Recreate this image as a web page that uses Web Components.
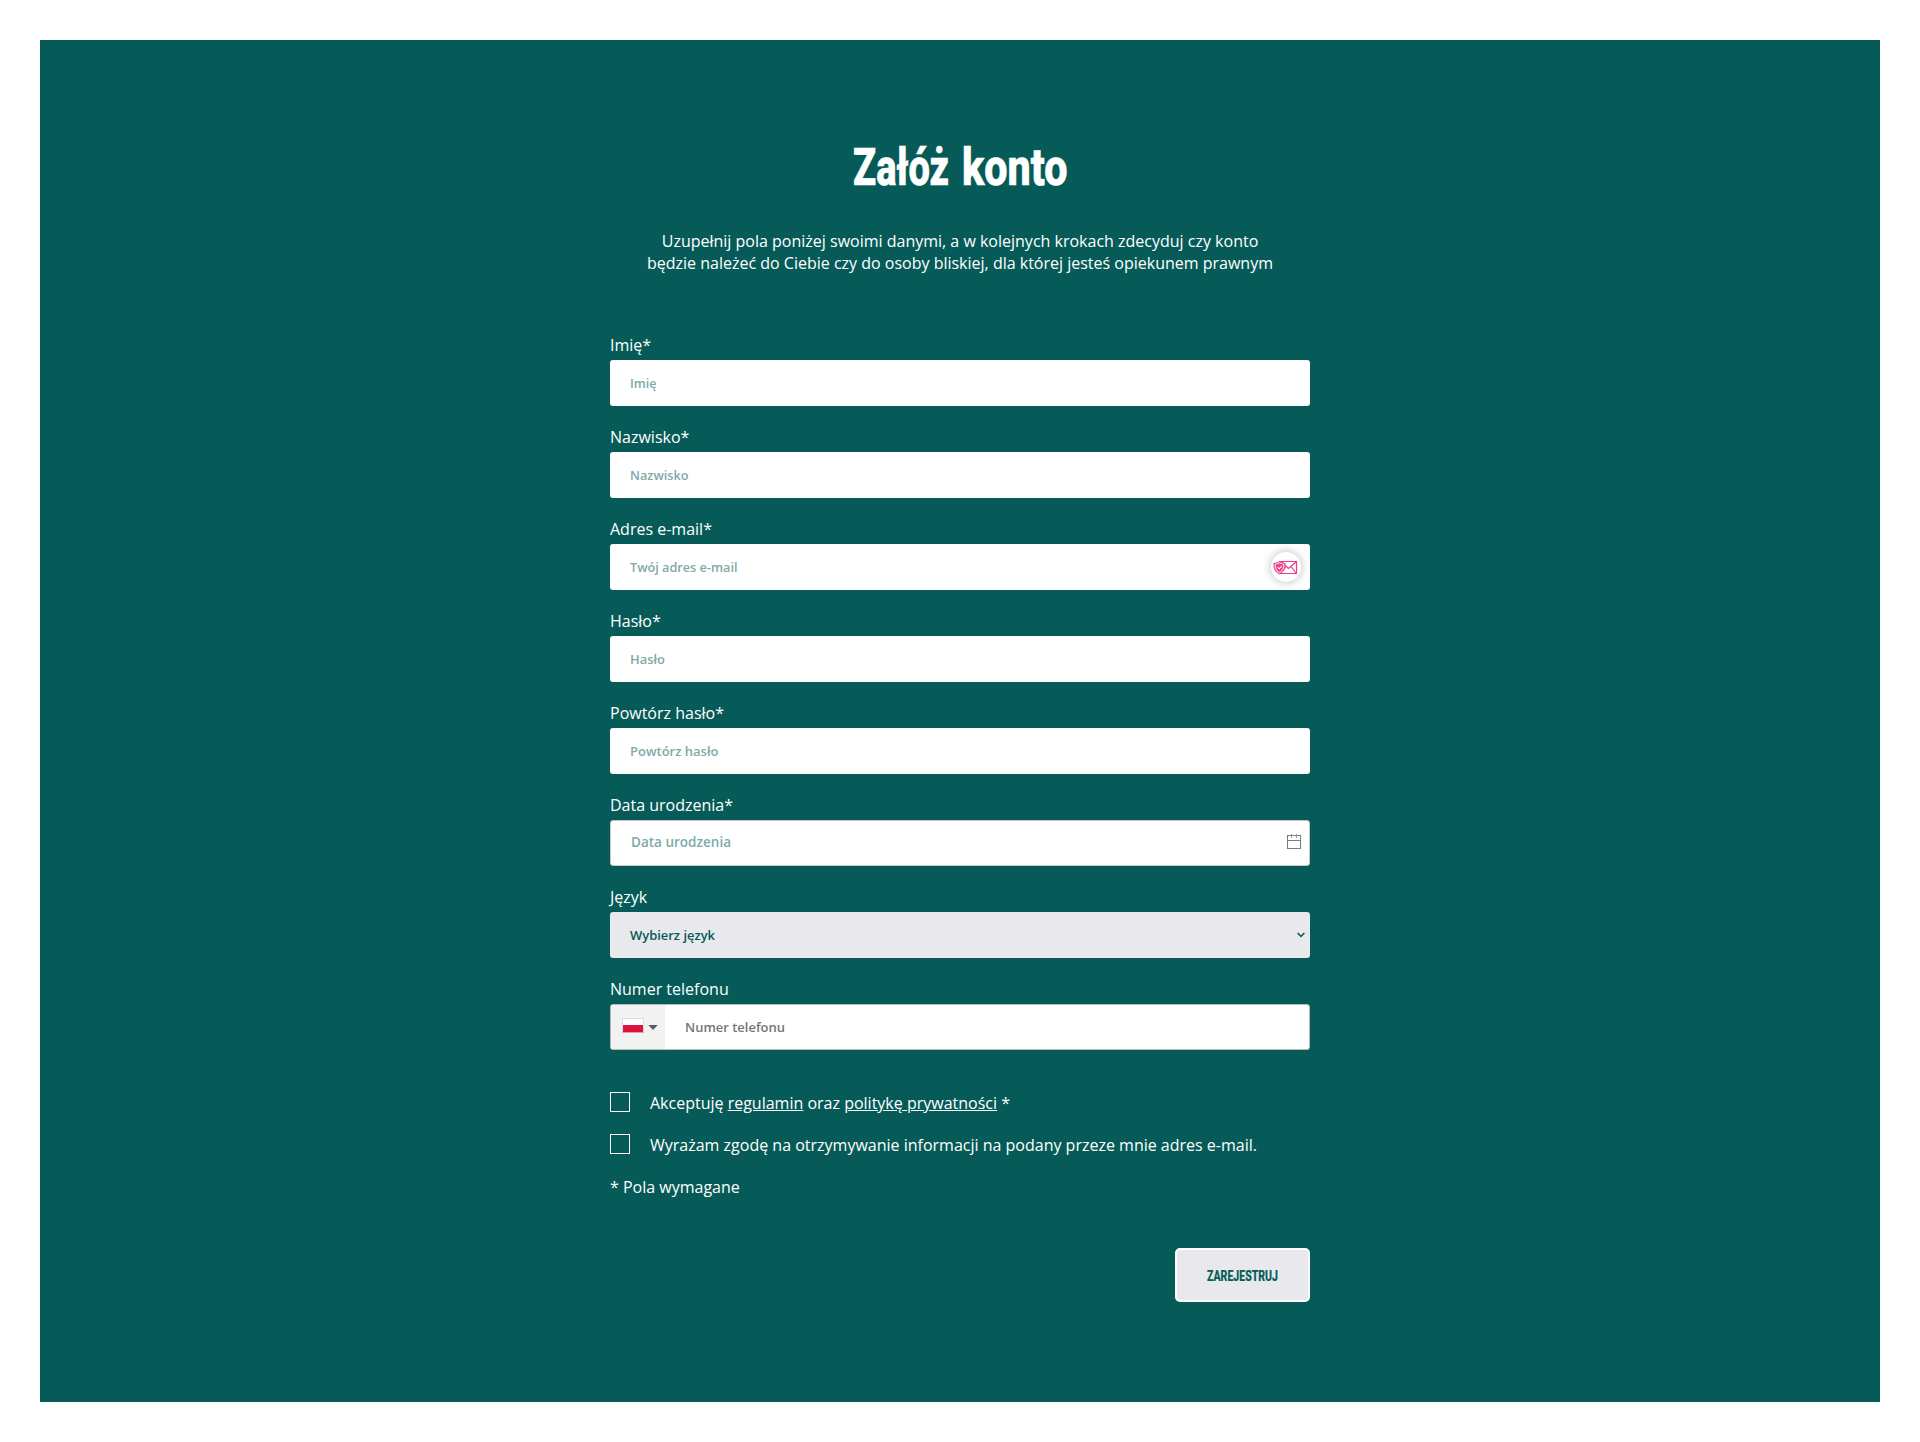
<!DOCTYPE html>
<html lang="pl">
<head>
<meta charset="utf-8">
<title>Załóż konto</title>
<style>
html,body{margin:0;background:#fff}
body{font:16px/22px "Open Sans",sans-serif;color:#fff}
</style>
</head>
<body>
<sign-up-page></sign-up-page>
<script>
const define=(name,html,setup)=>customElements.define(name,class extends HTMLElement{
  constructor(){super();this.attachShadow({mode:'open'}).innerHTML=html;}
  connectedCallback(){if(setup)setup.call(this,this.shadowRoot);}
});

/* Text condensed or widened to a given advance width */
define('fit-text',`<style>
:host{display:inline-block;white-space:nowrap}
span{display:inline-block;transform-origin:0 50%}
</style><span><slot></slot></span>`,function(r){
  const s=r.querySelector('span'),w=+this.getAttribute('width');
  const natural=s.getBoundingClientRect().width;
  this.style.width=w+'px';
  if(natural)s.style.transform=`scaleX(${w/natural})`;
});

define('form-field',`<style>
:host{display:block;margin-bottom:20px}
.label{height:22px;margin-bottom:4px}
.box{box-sizing:border-box;height:46px;border-radius:3px;background:#fff;display:flex;align-items:center;padding-left:20px;
 font:600 13px/18px "Open Sans",sans-serif;color:#7eaaa8}
.box ::slotted(.end){margin-left:auto}
:host([kind=date]) .box{border:1px solid #c6c6c6;font-size:14px;padding-bottom:2px}
:host([kind=select]) .box{background:#e8e8ed;color:#065b58}
:host([kind=phone]) .box{border:1px solid #b9b9b9;color:#757575;padding-left:0}
</style><div class="label"></div><div class="box"><slot></slot></div>`,function(r){
  r.querySelector('.label').textContent=this.getAttribute('label');
});

define('mail-badge',`<style>
:host{display:flex;width:30px;height:30px;margin-right:9px;border-radius:50%;background:#fff;box-shadow:0 0 10px rgba(0,0,0,.28);align-items:center;justify-content:center}
svg{display:block}
</style><svg width="30" height="30" viewBox="0 0 30 30" fill="none" stroke="#e93c8c">
<path d="M8 9.5H25.5V21.5H9M10 9.5L17.5 16.5L25.5 9.5M14.5 15L9 21.5M20 14.5L25.5 21.5" stroke-width="1.2"/>
<path d="M8.5 9.6C6.5 11.3 4.6 11.3 3 11.4C2.6 16 4.4 19.8 8.5 21.8C12.6 19.8 14.4 16 14 11.4C12.2 11.3 10.5 11.2 8.5 9.6Z" fill="#fbd3e5" stroke-width="1.1"/>
<path d="M8.5 11.2C7 12.2 6 12.5 4.8 12.6C4.6 16 5.9 18.8 8.5 20.1C11.1 18.8 12.4 16 12.2 12.6C11 12.5 10 12.2 8.5 11.2Z" fill="#e93c8c" stroke="none"/>
<path d="M6.6 15.2L8.3 16.8L10.8 14.2" stroke="#fff" stroke-width="1.1"/></svg>`);

define('calendar-icon',`<style>:host{display:block;margin:0 7px 3px 0;height:16px}svg{display:block}</style>
<svg width="16" height="16" viewBox="0 0 16 16" fill="none" stroke="#7d7d7d"><path d="M1.5 2.5H14.5V15.5H1.5ZM1.5 7.5H14.5" stroke-width="1.1"/><path d="M5.5 1V5M10.5 1V5" stroke="#999"/></svg>`);

define('chevron-icon',`<style>:host{display:block;margin-right:5px}svg{display:block}</style>
<svg width="8" height="6" viewBox="0 0 8 6" fill="none" stroke="#065b58" stroke-width="1.5"><path d="M.6 1L4 4.4L7.4 1"/></svg>`);

define('country-picker',`<style>
:host{display:flex;align-items:center;box-sizing:border-box;width:54px;height:44px;background:#f2f2f2;padding-left:11px;margin-right:20px;border-radius:2px 0 0 2px}
.flag{box-sizing:border-box;width:22px;height:15px;border:1px solid #ddd;border-bottom:1px solid #d8a0aa;background:linear-gradient(#fff 6px,#dc143c 6px);margin-right:4px;margin-top:-3px}
svg{display:block;margin-top:1px}
</style><div class="flag"></div><svg width="10" height="5" viewBox="0 0 10 5"><path d="M.3 0H9.7L5 5Z" fill="#5c5c5c"/></svg>`);

define('check-row',`<style>
:host{display:flex;gap:20px;height:22px;margin-bottom:20px}
i{box-sizing:border-box;width:20px;height:20px;border:1px solid #fff}
</style><i></i><span><slot></slot></span>`);

define('submit-button',`<style>
:host{display:flex;box-sizing:border-box;width:135px;height:54px;border:2px solid #fff;border-radius:5px;background:#e8e8ed;color:#065b58;
 align-items:center;justify-content:center;font:800 15.5px/20px Roboto,sans-serif;-webkit-text-stroke:.2px #065b58;padding-top:1px}
</style><slot></slot>`);

define('sign-up-page',`<style>
:host{display:block;padding:40px;box-sizing:border-box;height:1442px}
main{box-sizing:border-box;height:1362px;background:#065b58;display:flex;flex-direction:column;align-items:center;padding-top:92px}
h1{margin:0;height:98px;font:800 51.2px/72px Roboto,sans-serif;text-align:center;-webkit-text-stroke:.7px #fff}
p{margin:0;text-align:center;height:44px}
form{width:700px;margin-top:60px}
.checks{margin-top:22px;padding-top:20px}
.foot{display:flex;justify-content:flex-end;margin-top:50px}
a{color:inherit;text-decoration:underline}
</style>
<main>
<h1><fit-text width="96">Załóż</fit-text> <fit-text width="105.5">konto</fit-text></h1>
<p>Uzupełnij pola poniżej swoimi danymi, a w kolejnych krokach zdecyduj czy konto<br>będzie należeć do Ciebie czy do osoby bliskiej, dla której jesteś opiekunem prawnym</p>
<form>
<form-field label="Imię*"><fit-text width="26.5">Imię</fit-text></form-field>
<form-field label="Nazwisko*"><fit-text width="58.5">Nazwisko</fit-text></form-field>
<form-field label="Adres e-mail*"><fit-text width="107.5">Twój adres e-mail</fit-text><mail-badge class="end"></mail-badge></form-field>
<form-field label="Hasło*"><fit-text width="35">Hasło</fit-text></form-field>
<form-field label="Powtórz hasło*"><fit-text width="88.5">Powtórz hasło</fit-text></form-field>
<form-field label="Data urodzenia*" kind="date"><fit-text width="100">Data urodzenia</fit-text><calendar-icon class="end"></calendar-icon></form-field>
<form-field label="Język" kind="select"><fit-text width="85">Wybierz język</fit-text><chevron-icon class="end"></chevron-icon></form-field>
<form-field label="Numer telefonu" kind="phone"><country-picker></country-picker><fit-text width="100">Numer telefonu</fit-text></form-field>
<div class="checks">
<check-row>Akceptuję <a>regulamin</a> oraz <a>politykę prywatności</a> *</check-row>
<check-row>Wyrażam zgodę na otrzymywanie informacji na podany przeze mnie adres e-mail.</check-row>
<div>* Pola wymagane</div>
</div>
<div class="foot"><submit-button><fit-text width="71">ZAREJESTRUJ</fit-text></submit-button></div>
</form>
</main>`);
</script>
</body>
</html>
